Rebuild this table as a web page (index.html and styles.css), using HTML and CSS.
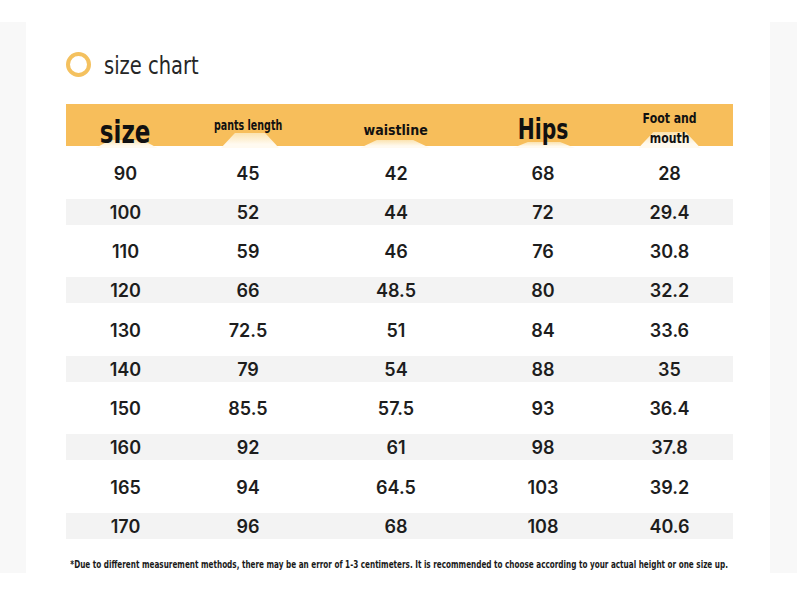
FILE: index.html
```html
<!DOCTYPE html>
<html lang="en">
<head>
<meta charset="utf-8">
<title>size chart</title>
<link rel="stylesheet" href="styles.css">
</head>
<body>
<div class="frame">
  <div class="card">
    <div class="title">
      <span class="ring"></span>
      <h1 class="title-text">size chart</h1>
    </div>
    <div class="chart">
      <div class="head">
        <div class="hcell c1"><span class="lbl big">size</span></div>
        <div class="hcell c2"><span class="lbl small">pants length</span></div>
        <div class="hcell c3"><span class="lbl mid">waistline</span></div>
        <div class="hcell c4"><span class="lbl hips">Hips</span></div>
        <div class="hcell c5"><span class="lbl two">Foot and<br>mouth</span></div>
      </div>
      <div class="row"><div class="band"><span>90</span><span>45</span><span>42</span><span>68</span><span>28</span></div></div>
      <div class="row alt"><div class="band"><span>100</span><span>52</span><span>44</span><span>72</span><span>29.4</span></div></div>
      <div class="row"><div class="band"><span>110</span><span>59</span><span>46</span><span>76</span><span>30.8</span></div></div>
      <div class="row alt"><div class="band"><span>120</span><span>66</span><span>48.5</span><span>80</span><span>32.2</span></div></div>
      <div class="row"><div class="band"><span>130</span><span>72.5</span><span>51</span><span>84</span><span>33.6</span></div></div>
      <div class="row alt"><div class="band"><span>140</span><span>79</span><span>54</span><span>88</span><span>35</span></div></div>
      <div class="row"><div class="band"><span>150</span><span>85.5</span><span>57.5</span><span>93</span><span>36.4</span></div></div>
      <div class="row alt"><div class="band"><span>160</span><span>92</span><span>61</span><span>98</span><span>37.8</span></div></div>
      <div class="row"><div class="band"><span>165</span><span>94</span><span>64.5</span><span>103</span><span>39.2</span></div></div>
      <div class="row alt"><div class="band"><span>170</span><span>96</span><span>68</span><span>108</span><span>40.6</span></div></div>
    </div>
    <p class="note"><span class="note-text">*Due to different measurement methods, there may be an error of 1-3 centimeters. It is recommended to choose according to your actual height or one size up.</span></p>
  </div>
</div>
</body>
</html>
```

FILE: styles.css
```css
html, body {
  margin: 0;
  padding: 0;
  background: #ffffff;
}

.frame {
  margin-top: 22px;
  height: 551px;
  background: #f8f8f8;
  padding: 0 27px 0 26px;
  box-sizing: border-box;
}

.card {
  background: #ffffff;
  height: 100%;
  padding: 30px 37px 0 40px;
  box-sizing: border-box;
  overflow: hidden;
}

.title {
  display: flex;
  align-items: center;
  gap: 13px;
  height: 25px;
}

.ring {
  flex: none;
  width: 25px;
  height: 25px;
  border: 4px solid #f4c15f;
  border-radius: 50%;
  box-sizing: border-box;
}

.title-text {
  margin: 2px 0 0;
  font-family: "DejaVu Sans", sans-serif;
  font-weight: 400;
  font-size: 25px;
  color: #262626;
  transform: scaleX(0.78);
  transform-origin: left center;
  white-space: nowrap;
}

.chart {
  margin-top: 27px;
}

.head,
.band {
  display: grid;
  grid-template-columns: 119px 126px 170px 124px 129px;
}

.head {
  height: 42px;
  background: #f7be5b;
}

.hcell {
  position: relative;
  display: flex;
  justify-content: center;
  align-items: center;
  font-family: "DejaVu Sans", sans-serif;
  font-weight: 700;
  color: #111;
}

.hcell::after {
  content: "";
  position: absolute;
  bottom: 0;
  left: 50%;
  transform: translateX(-50%);
  background: linear-gradient(#fbe3b0, #fffaf0 75%);
  clip-path: polygon(24% 0, 76% 0, 100% 100%, 0 100%);
}

.c1::after { width: 62px; height: 8px; margin-left: 1px; }
.c2::after { width: 58px; height: 15px; margin-left: 2px; }
.c3::after { width: 70px; height: 8px; margin-left: -1px; }
.c4::after { width: 62px; height: 6px; margin-left: 1px; }
.c5::after { width: 62px; height: 16px; margin-left: 0; }

.lbl {
  position: relative;
  z-index: 1;
  display: inline-block;
  text-align: center;
  white-space: nowrap;
}

.big {
  font-size: 32px;
  line-height: 32px;
  margin-top: 12px;
  transform: scaleX(0.72);
}

.small {
  font-size: 14px;
  margin-top: -2px;
  transform: scaleX(0.68);
}

.mid {
  font-size: 14px;
  margin-top: 7px;
  transform: scaleX(0.9);
}

.hips {
  font-size: 29px;
  margin-top: 6px;
  transform: scaleX(0.7);
}

.two {
  font-size: 14px;
  line-height: 20px;
  margin-top: 3px;
  transform: scaleX(0.78);
}

.chart .row {
  height: 39.25px;
  padding: 6.6px 0;
  box-sizing: border-box;
}

.head + .row {
  margin-top: 7px;
}

.band {
  height: 26px;
  align-items: center;
}

.alt .band {
  background: #f3f3f3;
}

.band span {
  text-align: center;
  font-family: "Inter", "Noto Sans", sans-serif;
  font-weight: 600;
  font-size: 18px;
  color: #1d1d1d;
  margin-top: 1px;
}

.note {
  margin: 12px 0 0;
  display: flex;
  justify-content: center;
  font-family: "DejaVu Sans", sans-serif;
  font-weight: 700;
  font-size: 11px;
  color: #1a1a1a;
  white-space: nowrap;
}

.note-text {
  flex: none;
  display: block;
  transform: scaleX(0.66);
  transform-origin: center;
}
```
